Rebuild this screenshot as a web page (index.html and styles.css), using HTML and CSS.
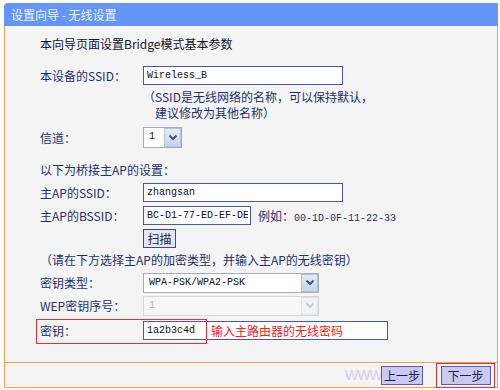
FILE: index.html
```html
<!DOCTYPE html>
<html lang="zh-CN">
<head>
    <meta charset="UTF-8">
    <title>设置向导 - 无线设置</title>
    <link rel="stylesheet" href="styles.css">
</head>
<body>
    <div class="wizard">
        <div class="title">设置向导 - 无线设置</div>
        <div class="panel">
            <div class="content">
                <p class="intro">本向导页面设置Bridge模式基本参数</p>

                <div class="row">
                    <span class="label">本设备的SSID：</span>
                    <input class="text ssid" type="text" value="Wireless_B">
                </div>
                <div class="hint">
                    <div>（SSID是无线网络的名称，可以保持默认，</div>
                    <div class="indent">建议修改为其他名称）</div>
                </div>

                <div class="row channel">
                    <span class="label">信道：</span>
                    <div class="select tiny">
                        <span class="value">1</span>
                        <span class="arrow"><svg width="10" height="7" viewBox="0 0 10 7"><path d="M1.5 1.5 L5 5 L8.5 1.5" fill="none" stroke="#3f5687" stroke-width="2"/></svg></span>
                    </div>
                </div>

                <div class="row section">以下为桥接主AP的设置：</div>

                <div class="row">
                    <span class="label">主AP的SSID：</span>
                    <input class="text ssid" type="text" value="zhangsan">
                </div>
                <div class="row">
                    <span class="label">主AP的BSSID：</span>
                    <input class="text bssid" type="text" value="BC-D1-77-ED-EF-DE">
                    <span class="example">例如：<span class="mono">00-1D-0F-11-22-33</span></span>
                </div>
                <div class="row">
                    <span class="label"></span>
                    <button class="scan">扫描</button>
                </div>

                <div class="note">（请在下方选择主AP的加密类型，并输入主AP的无线密钥）</div>

                <div class="row keytype">
                    <span class="label">密钥类型：</span>
                    <div class="select wide">
                        <span class="value">WPA-PSK/WPA2-PSK</span>
                        <span class="arrow"><svg width="10" height="7" viewBox="0 0 10 7"><path d="M1.5 1.5 L5 5 L8.5 1.5" fill="none" stroke="#3f5687" stroke-width="2"/></svg></span>
                    </div>
                </div>
                <div class="row">
                    <span class="label">WEP密钥序号：</span>
                    <div class="select wide disabled">
                        <span class="value">1</span>
                        <span class="arrow"><svg width="10" height="7" viewBox="0 0 10 7"><path d="M1.5 1.5 L5 5 L8.5 1.5" fill="none" stroke="#c3ccd8" stroke-width="2"/></svg></span>
                    </div>
                </div>
                <div class="row key">
                    <span class="label">密钥：</span>
                    <div class="text keybox">
                        <span class="mono">1a2b3c4d</span>
                        <span class="remark">输入主路由器的无线密码</span>
                    </div>
                </div>
            </div>

            <div class="footer">
                <span class="watermark">WWW</span>
                <button class="btn">上一步</button>
                <div class="next-mark">
                    <button class="btn">下一步</button>
                </div>
            </div>
        </div>
    </div>
</body>
</html>
```

FILE: styles.css
```css
* {
    box-sizing: border-box;
    margin: 0;
    padding: 0;
}

body {
    background: #fff;
    font-family: "Noto Sans CJK SC", "Liberation Sans", sans-serif;
    font-size: 12px;
    color: #1b3170;
}

.wizard {
    width: 494px;
    margin: 3px 0 0 4px;
}

.title {
    height: 23px;
    line-height: 23px;
    padding-left: 7px;
    background: #6396f7;
    color: #eef3ff;
    border-radius: 4px 0 0 0;
}

.panel {
    background: #f4f4f4;
    border: 1px solid #f3a04e;
    border-top: none;
}

.content {
    height: 336px;
    padding: 10px 0 0 35px;
}

.intro {
    line-height: 16px;
    color: #16162a;
}

.row {
    display: flex;
    align-items: center;
    height: 23px;
}

.row:first-of-type {
    margin-top: 12px;
}

.label {
    width: 103px;
    flex-shrink: 0;
}

.mono {
    font-family: "Liberation Mono", monospace;
    font-size: 10px;
}

.text {
    height: 19px;
    border: 1px solid #4b57a6;
    background: #fff;
    padding: 0 2px 0 3px;
    font-family: "Liberation Mono", monospace;
    font-size: 10px;
    color: #111;
    outline: none;
}

.ssid {
    width: 200px;
}

.bssid {
    width: 108px;
}

.example {
    margin-left: 7px;
}

.hint {
    margin: 2px 0 0 103px;
    line-height: 16px;
}

.hint .indent {
    padding-left: 12px;
}

.channel {
    margin-top: 5px;
}

.section {
    margin-top: 9px;
}

.select {
    display: flex;
    height: 20px;
    border: 1px solid #a7adb6;
    background: #fff;
}

.select .value {
    flex: 1;
    padding-left: 5px;
    line-height: 18px;
    font-family: "Liberation Mono", monospace;
    font-size: 10px;
    color: #111;
}

.select .arrow {
    width: 17px;
    display: flex;
    align-items: center;
    justify-content: center;
    background: linear-gradient(#e4ebf7, #c6d4ec);
    border: 1px solid #b3c2dc;
}

.tiny {
    width: 39px;
    height: 21px;
}

.wide {
    width: 176px;
}

.disabled {
    border-color: #d4d7db;
    background: #f7f7f7;
}

.disabled .value {
    color: #b5b5b5;
}

.disabled .arrow {
    background: #f1f3f6;
    border-color: #e0e4ea;
}

.scan {
    width: 33px;
    height: 19px;
    border: 1px solid #3d4794;
    background: #e6e6f2;
    font-family: inherit;
    font-size: 12px;
    color: #1a1f4a;
}

.note {
    height: 20px;
    line-height: 20px;
}

.keytype {
    margin-top: 1px;
}

.key {
    position: relative;
    margin-top: 2px;
}

.key::before {
    content: "";
    position: absolute;
    left: -4px;
    top: 0;
    width: 169px;
    height: 23px;
    border: 1px solid #e0323a;
    pointer-events: none;
}

.keybox {
    width: 245px;
    display: flex;
    align-items: center;
    gap: 16px;
}

.remark {
    font-family: "Noto Sans CJK SC", sans-serif;
    font-size: 12px;
    color: #f52222;
}

.footer {
    position: relative;
    height: 25px;
    border-top: 1px solid #f3a04e;
    display: flex;
    align-items: center;
    justify-content: flex-end;
    gap: 13px;
    padding-right: 2px;
}

.watermark {
    position: absolute;
    left: 340px;
    top: 3px;
    font-family: "Liberation Sans", sans-serif;
    font-size: 14px;
    line-height: 18px;
    color: #dccbe8;
    letter-spacing: -1px;
}

.btn {
    position: relative;
    width: 42px;
    height: 19px;
    border: 1px solid #5b5bb8;
    background: #c9c9f2;
    font-family: inherit;
    font-size: 12px;
    line-height: 17px;
    color: #1a1f4a;
}

.next-mark {
    display: flex;
    align-items: center;
    justify-content: center;
    width: 59px;
    height: 25px;
    border: 1px solid #e0323a;
}

.next-mark .btn {
    width: 50px;
}
```
